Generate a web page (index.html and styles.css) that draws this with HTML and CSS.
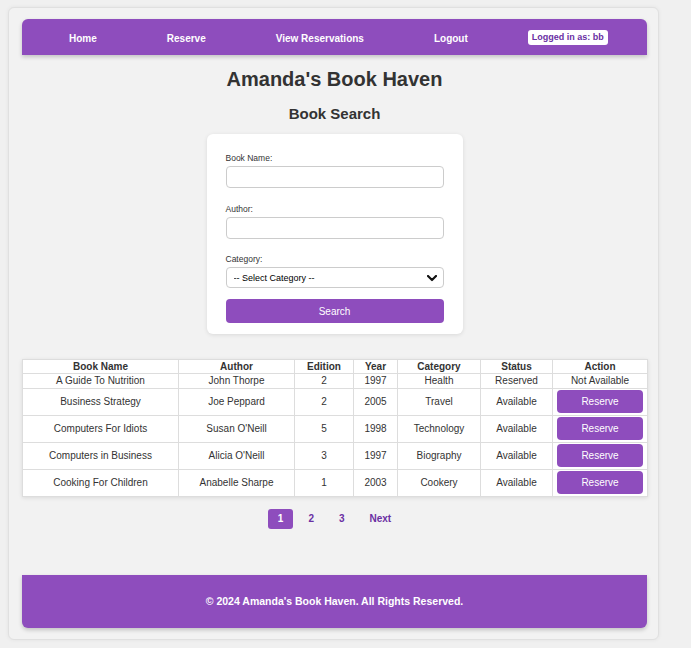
FILE: index.html
```
<!DOCTYPE html>
<html lang="en">
<head>
<meta charset="utf-8">
<title>Amanda's Book Haven</title>
<link rel="stylesheet" href="styles.css">
</head>
<body>
<div class="page">
  <nav class="topnav">
    <a class="nav-link" href="#">Home</a>
    <a class="nav-link" href="#">Reserve</a>
    <a class="nav-link" href="#">View Reservations</a>
    <a class="nav-link" href="#">Logout</a>
    <span class="user-badge">Logged in as: bb</span>
  </nav>

  <h1 class="site-title">Amanda's Book Haven</h1>
  <h2 class="section-title">Book Search</h2>

  <form class="search-card">
    <label class="field-label">Book Name:</label>
    <input class="field-input" type="text">
    <label class="field-label">Author:</label>
    <input class="field-input" type="text">
    <label class="field-label">Category:</label>
    <div class="select-wrap">
      <select class="field-select">
        <option>-- Select Category --</option>
      </select>
      <svg class="select-chevron" width="10" height="7" viewBox="0 0 10 7"><polyline points="1,1 5,5 9,1" fill="none" stroke="#111" stroke-width="2.2" stroke-linecap="round" stroke-linejoin="round"/></svg>
    </div>
    <button class="search-btn" type="button">Search</button>
  </form>

  <table class="book-table">
    <colgroup>
      <col class="col-name"><col class="col-author"><col class="col-edition"><col class="col-year"><col class="col-category"><col class="col-status"><col class="col-action">
    </colgroup>
    <thead>
      <tr><th>Book Name</th><th>Author</th><th>Edition</th><th>Year</th><th>Category</th><th>Status</th><th>Action</th></tr>
    </thead>
    <tbody>
      <tr><td>A Guide To Nutrition</td><td>John Thorpe</td><td>2</td><td>1997</td><td>Health</td><td>Reserved</td><td>Not Available</td></tr>
      <tr><td>Business Strategy</td><td>Joe Peppard</td><td>2</td><td>2005</td><td>Travel</td><td>Available</td><td><button class="reserve-btn" type="button">Reserve</button></td></tr>
      <tr><td>Computers For Idiots</td><td>Susan O'Neill</td><td>5</td><td>1998</td><td>Technology</td><td>Available</td><td><button class="reserve-btn" type="button">Reserve</button></td></tr>
      <tr><td>Computers in Business</td><td>Alicia O'Neill</td><td>3</td><td>1997</td><td>Biography</td><td>Available</td><td><button class="reserve-btn" type="button">Reserve</button></td></tr>
      <tr><td>Cooking For Children</td><td>Anabelle Sharpe</td><td>1</td><td>2003</td><td>Cookery</td><td>Available</td><td><button class="reserve-btn" type="button">Reserve</button></td></tr>
    </tbody>
  </table>

  <div class="pager">
    <a class="page-item active" href="#">1</a>
    <a class="page-item" href="#">2</a>
    <a class="page-item" href="#">3</a>
    <a class="page-item page-next" href="#">Next</a>
  </div>

  <footer class="site-footer">© 2024 Amanda's Book Haven. All Rights Reserved.</footer>
</div>
</body>
</html>
```
FILE: styles.css
```
* { box-sizing: border-box; }

body {
  margin: 0;
  background: #f0f0f0;
  font-family: "Liberation Sans", Arial, sans-serif;
  color: #333;
}

.page {
  margin: 7px 0 8px 8px;
  width: 651px;
  background: #f2f2f2;
  border: 1px solid #e0e0e0;
  border-radius: 6px;
  box-shadow: 0 0 4px rgba(0, 0, 0, 0.06);
  padding: 11px 11px 11px 13px;
}

.topnav {
  height: 36px;
  background: #8e4dbd;
  border-radius: 6px 6px 0 0;
  box-shadow: 0 2px 4px rgba(0, 0, 0, 0.2);
  display: flex;
  align-items: center;
  gap: 70px;
  padding-left: 47px;
}

.nav-link {
  color: #fff;
  font-weight: bold;
  font-size: 10px;
  text-decoration: none;
  line-height: 12px;
  padding-top: 3px;
}

.user-badge {
  margin-left: -10px;
  background: #fff;
  color: #6a2fa3;
  font-weight: bold;
  font-size: 9px;
  line-height: 11px;
  padding: 2px 4px;
  border-radius: 3px;
}

.site-title {
  margin: 12px 0 0;
  font-size: 20px;
  line-height: 24px;
  text-align: center;
  color: #333;
}

.section-title {
  margin: 14px 0 0;
  font-size: 15px;
  line-height: 18px;
  text-align: center;
  color: #333;
}

.search-card {
  width: 256px;
  margin: 11px auto 0;
  background: #fff;
  border-radius: 6px;
  box-shadow: 0 1px 4px rgba(0, 0, 0, 0.1);
  padding: 19px 19px 11px;
}

.field-label {
  display: block;
  font-size: 8.5px;
  line-height: 10px;
  margin-bottom: 3px;
  color: #333;
}

.field-input {
  display: block;
  width: 100%;
  height: 22px;
  border: 1px solid #ccc;
  border-radius: 4px;
  margin: 0 0 16px;
  background: #fff;
}

.field-input + .field-label + .field-input { margin-bottom: 15px; }

.select-wrap {
  position: relative;
  margin-top: 1px;
  margin-bottom: 11px;
}

.field-select {
  display: block;
  width: 100%;
  height: 21px;
  appearance: none;
  -webkit-appearance: none;
  border: 1px solid #ccc;
  border-radius: 4px;
  background: #fff;
  padding: 1px 7px 0;
  font-family: "Liberation Sans", Arial, sans-serif;
  font-size: 9px;
  color: #000;
}

.select-chevron {
  position: absolute;
  right: 7px;
  top: 8px;
}

.search-btn {
  display: block;
  width: 100%;
  height: 24px;
  border: none;
  border-radius: 4px;
  background: #8e4dbd;
  color: #fff;
  font-family: "Liberation Sans", Arial, sans-serif;
  font-size: 10px;
}

.book-table {
  margin-top: 25px;
  width: 625px;
  border-collapse: collapse;
  table-layout: fixed;
  background: #fff;
  box-shadow: 0 1px 4px rgba(0, 0, 0, 0.1);
  font-size: 10px;
  color: #333;
}

.col-name { width: 156px; }
.col-author { width: 116px; }
.col-edition { width: 59px; }
.col-year { width: 44px; }
.col-category { width: 83px; }
.col-status { width: 72px; }
.col-action { width: 95px; }

.book-table th,
.book-table td {
  border: 1px solid #ddd;
  padding: 0 3px;
  text-align: center;
  vertical-align: middle;
  white-space: nowrap;
}

.book-table th {
  font-weight: bold;
  line-height: 13px;
}

.book-table td { line-height: 14px; }

.reserve-btn {
  display: block;
  width: 86px;
  height: 23px;
  margin: 1px auto 2px;
  border: none;
  border-radius: 4px;
  background: #8e4dbd;
  color: #fff;
  font-family: "Liberation Sans", Arial, sans-serif;
  font-size: 10px;
}

.pager {
  margin-top: 12px;
  display: flex;
  justify-content: center;
  gap: 5px;
}

.page-item {
  display: block;
  padding: 0 10px;
  line-height: 20px;
  font-size: 10px;
  font-weight: bold;
  color: #6a2fa3;
  text-decoration: none;
  border-radius: 3px;
}

.page-item.active {
  background: #8e4dbd;
  color: #fff;
}

.site-footer {
  margin-top: 46px;
  height: 53px;
  background: #8e4dbd;
  border-radius: 0 0 6px 6px;
  box-shadow: 0 2px 4px rgba(0, 0, 0, 0.2);
  display: flex;
  align-items: center;
  justify-content: center;
  color: #fff;
  font-weight: bold;
  font-size: 10.5px;
  padding-bottom: 1px;
}
```
